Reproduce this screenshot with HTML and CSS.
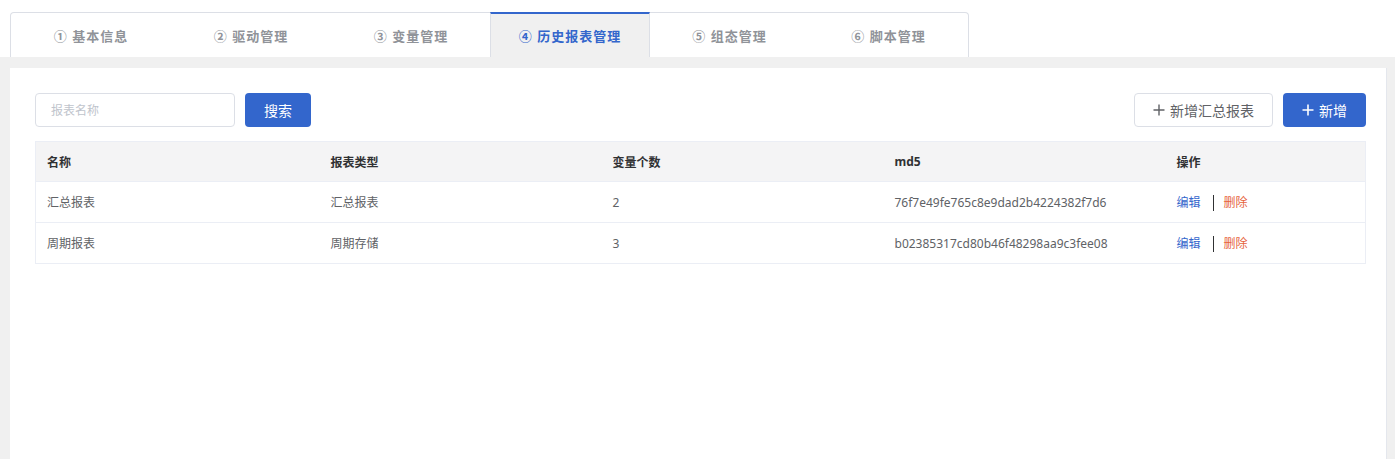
FILE: index.html
```html
<!DOCTYPE html>
<html lang="zh-CN">
<head>
    <meta charset="UTF-8">
    <meta name="viewport" content="width=device-width, initial-scale=1.0">
    <title>历史报表管理</title>
    <link rel="stylesheet" href="styles.css">
</head>
<body>
    <div class="topo">
        <div class="abas">
            <div class="aba">① 基本信息</div>
            <div class="aba">② 驱动管理</div>
            <div class="aba">③ 变量管理</div>
            <div class="aba ativa">④ 历史报表管理</div>
            <div class="aba">⑤ 组态管理</div>
            <div class="aba">⑥ 脚本管理</div>
        </div>
    </div>

    <div class="principal">
        <div class="cartao">
            <div class="barra">
                <div class="busca">
                    <input class="input" type="text" placeholder="报表名称">
                    <button class="button">搜索</button>
                </div>
                <div class="acoes">
                    <button class="button-branco">
                        <svg class="mais" viewBox="0 0 12 12"><path d="M6 0.5V11.5M0.5 6H11.5" stroke="currentColor" stroke-width="1.4" fill="none"/></svg>新增汇总报表
                    </button>
                    <button class="button button-novo">
                        <svg class="mais" viewBox="0 0 12 12"><path d="M6 0.5V11.5M0.5 6H11.5" stroke="currentColor" stroke-width="1.6" fill="none"/></svg>新增
                    </button>
                </div>
            </div>

            <table class="tabela">
                <thead>
                    <tr>
                        <th class="col1">名称</th>
                        <th class="col2">报表类型</th>
                        <th class="col3">变量个数</th>
                        <th class="col4">md5</th>
                        <th>操作</th>
                    </tr>
                </thead>
                <tbody>
                    <tr>
                        <td>汇总报表</td>
                        <td>汇总报表</td>
                        <td>2</td>
                        <td>76f7e49fe765c8e9dad2b4224382f7d6</td>
                        <td><a class="editar">编辑</a><span class="sep"></span><a class="excluir">删除</a></td>
                    </tr>
                    <tr>
                        <td>周期报表</td>
                        <td>周期存储</td>
                        <td>3</td>
                        <td>b02385317cd80b46f48298aa9c3fee08</td>
                        <td><a class="editar">编辑</a><span class="sep"></span><a class="excluir">删除</a></td>
                    </tr>
                </tbody>
            </table>
        </div>
    </div>
</body>
</html>
```

FILE: styles.css
```css
html, body {
    height: 100%;
}

body {
    font-family: "Noto Sans", "Noto Sans CJK SC", sans-serif;
    margin: 0;
    padding: 0;
    display: flex;
    flex-direction: column;
    background-color: #ffffff;
    color: #606266;
}

.topo {
    background-color: #ffffff;
    padding: 12px 0 0 10px;
    height: 45px;
    flex-shrink: 0;
}

.abas {
    display: flex;
    width: 959px;
    border: 1px solid #dcdfe6;
    border-bottom: none;
    border-radius: 4px 4px 0 0;
    box-sizing: border-box;
    height: 45px;
}

.aba {
    width: 160px;
    flex-shrink: 0;
    display: flex;
    justify-content: center;
    align-items: center;
    font-size: 13px;
    font-weight: bold;
    color: #909399;
    letter-spacing: 1px;
    box-sizing: border-box;
}

.aba:nth-child(n+5) {
    width: 159px;
}

.aba.ativa {
    width: 160px;
    background-color: #f0f0f0;
    color: #3366cc;
    border-top: 2px solid #3366cc;
    border-left: 1px solid #dcdfe6;
    border-right: 1px solid #dcdfe6;
    margin-top: -1px;
    margin-left: -1px;
    padding-bottom: 1px;
}

.principal {
    flex: 1;
    background-color: #f0f0f0;
    padding: 11px 8px 0 10px;
    display: flex;
}

.cartao {
    flex: 1;
    background-color: #ffffff;
    padding: 25px 20px 0 25px;
    border-right: 1px solid #e4e7ed;
}

.barra {
    display: flex;
    justify-content: space-between;
    align-items: center;
    height: 34px;
}

.busca, .acoes {
    display: flex;
    gap: 10px;
    align-items: center;
}

.input {
    width: 200px;
    height: 34px;
    padding: 0 15px;
    border: 1px solid #dcdfe6;
    border-radius: 4px;
    box-sizing: border-box;
    font-family: inherit;
    font-size: 12px;
    outline: none;
}

.input::placeholder {
    color: #c0c4cc;
}

.button {
    background-color: #3366cc;
    color: white;
    border: none;
    height: 34px;
    padding: 0 19px;
    border-radius: 4px;
    font-family: inherit;
    font-size: 14px;
    cursor: pointer;
}

.button-branco {
    background-color: #ffffff;
    color: #606266;
    border: 1px solid #dcdfe6;
    height: 34px;
    width: 139px;
    border-radius: 4px;
    font-family: inherit;
    font-size: 14px;
    cursor: pointer;
}

.button-branco, .button-novo {
    display: flex;
    justify-content: center;
    align-items: center;
}

.button-novo {
    width: 83px;
    padding: 0;
}

.mais {
    width: 12px;
    height: 12px;
    margin-right: 5px;
}

.tabela {
    width: 100%;
    margin-top: 14px;
    border-collapse: collapse;
    border: 1px solid #ebeef5;
    font-size: 12px;
    table-layout: fixed;
}

.tabela th,
.tabela td {
    text-align: left;
    padding: 0 11px;
    height: 40px;
    box-sizing: border-box;
    border-bottom: 1px solid #ebeef5;
}

.tabela td {
    height: 41px;
}

.tabela th {
    background-color: #f4f4f5;
    color: #303133;
    font-weight: bold;
}

.col1 { width: 284px; }
.col2 { width: 282px; }
.col3 { width: 282px; }
.col4 { width: 282px; }

.editar {
    color: #3366cc;
}

.excluir {
    color: #e6623c;
}

.sep {
    display: inline-block;
    width: 1px;
    height: 16px;
    background-color: #303133;
    margin: 0 10px 0 12px;
    vertical-align: middle;
}
```
